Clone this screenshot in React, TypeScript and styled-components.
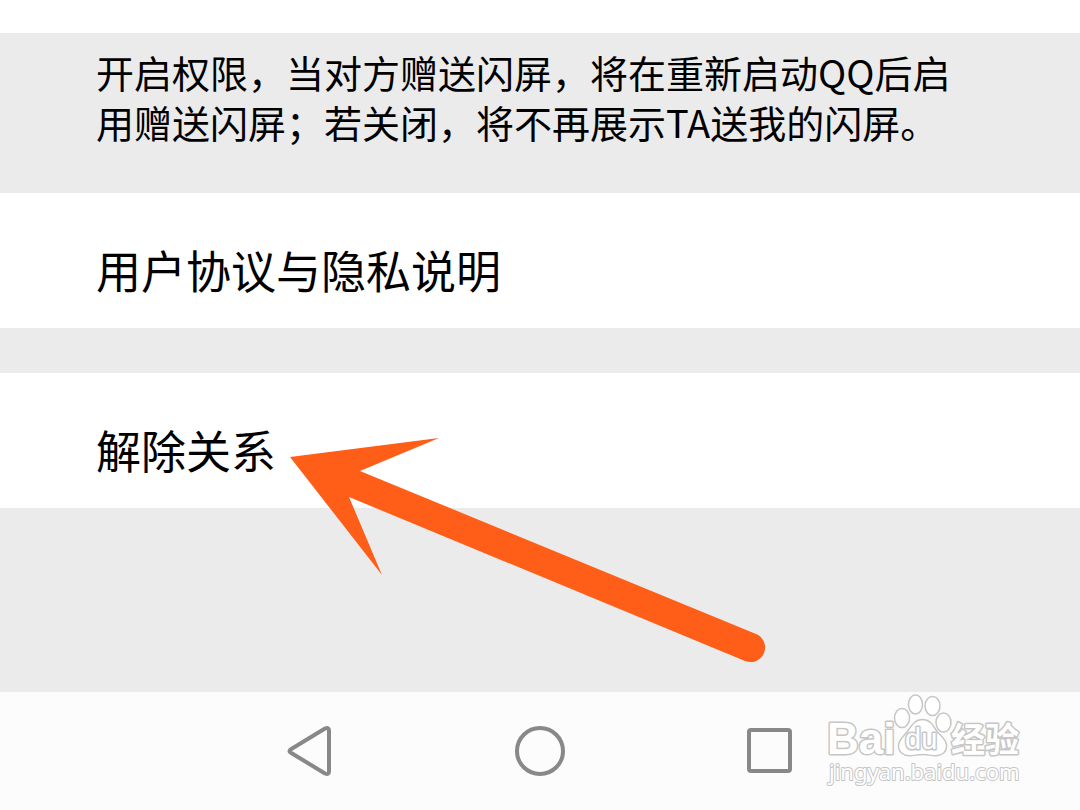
import React from "react";
import styled, { createGlobalStyle } from "styled-components";

const GlobalStyle = createGlobalStyle`
  *, *::before, *::after { box-sizing: border-box; }
  body { margin: 0; background: #ebebeb; }
`;

const Screen = styled.div`
  display: flex;
  flex-direction: column;
  min-height: 100vh;
  overflow-x: hidden;
  background: #ebebeb;
  color: #000;
  font-family: "Noto Sans CJK SC", sans-serif;
`;

const Settings = styled.main`
  flex: 1;
  display: flex;
  flex-direction: column;
`;

const PreviousRow = styled.div`
  height: 33px;
  background: #fff;
`;

const Note = styled.p`
  margin: 0;
  padding: 14px 96px 46px;
  font-size: 38px;
  line-height: 50px;
`;

const Group = styled.section<{ $spaced?: boolean }>`
  position: relative;
  margin-top: ${({ $spaced }) => ($spaced ? "45px" : "0")};
  background: #fff;
`;

const Row = styled.button`
  display: block;
  width: 100%;
  padding: 44px 96px 26px;
  border: 0;
  background: transparent;
  color: inherit;
  font: inherit;
  font-size: 45px;
  line-height: 65px;
  text-align: left;
  text-decoration: none;
  cursor: pointer;
`;

const Pointer = styled.svg`
  position: absolute;
  left: 288px;
  top: 63px;
  z-index: 1;
  pointer-events: none;
`;

const NavBar = styled.nav`
  position: relative;
  display: grid;
  grid-template-columns: repeat(3, 230px);
  justify-content: center;
  height: 118px;
  background: #fcfcfc;
`;

const NavButton = styled.button`
  display: flex;
  align-items: center;
  justify-content: center;
  padding: 0;
  border: 0;
  background: transparent;
  color: #888;
  cursor: pointer;
`;

const NavIcon = styled.svg`
  display: block;
  fill: none;
  stroke: currentColor;
  stroke-linejoin: round;
`;

const Watermark = styled.svg`
  position: absolute;
  right: 52px;
  top: 0;
  pointer-events: none;
  fill: #fff;
  stroke: #c6c6c6;
  stroke-width: 1.5;
  stroke-linejoin: round;
`;

const MarkText = styled.text<{ $size: number; $family?: string; $bold?: boolean; $line?: number }>`
  font-family: ${({ $family }) => `"${$family ?? "Liberation Sans"}"`}, sans-serif;
  font-size: ${({ $size }) => $size}px;
  font-weight: ${({ $bold }) => ($bold ? 700 : 400)};
  stroke-width: ${({ $line }) => $line ?? 3};
  paint-order: stroke;
`;

function BaiduMark() {
  return (
    <Watermark width="204" height="110" viewBox="824 692 204 110" aria-label="Baidu 经验">
      <MarkText x="827" y="754" $size={44} $bold>Bai</MarkText>
      <path d="M922.5 719.5C915.500 719.500 912 724.500 908.500 730C905 735.500 898.500 738.500 898.500 746C898.500 752 903.500 756 910 755.700C914.500 755.500 917.500 754.500 922.500 754.500C927.500 754.500 931 755.700 935.500 755.700C942.500 755.700 947 751.500 946.500 745C946 738 939.500 735.500 936 730C932.500 724.500 929.500 719.500 922.500 719.500Z" />
      <ellipse cx="902" cy="718" rx="7.500" ry="9.500" />
      <ellipse cx="915.500" cy="704.500" rx="7" ry="9.500" />
      <ellipse cx="932.500" cy="706" rx="7.500" ry="9.500" />
      <ellipse cx="943.500" cy="722.500" rx="7.500" ry="9.500" />
      <MarkText x="905" y="749" $size={29} $line={3}>du</MarkText>
      <MarkText x="951" y="752" $size={34} $bold $family="Noto Sans CJK SC">经验</MarkText>
      <MarkText x="829" y="780" $size={22} $family="Noto Sans" $line={2}>jingyan.baidu.com</MarkText>
    </Watermark>
  );
}

export default function App() {
  return (
    <Screen>
      <GlobalStyle />
      <Settings>
        <PreviousRow />
        <Note>
          开启权限，当对方赠送闪屏，将在重新启动QQ后启用赠送闪屏；若关闭，将不再展示TA送我的闪屏。
        </Note>
        <Group>
          <Row as="a" href="#agreement">用户协议与隐私说明</Row>
        </Group>
        <Group $spaced>
          <Row type="button">解除关系</Row>
          <Pointer width="480" height="230" viewBox="288 436 480 230" aria-hidden="true">
            <path
              fill="#ff5e18"
              d="M290 457L439 438L360 471L756 634A14 14 0 0 1 745 661L349 497L382 575Z"
            />
          </Pointer>
        </Group>
      </Settings>
      <NavBar aria-label="系统导航">
        <NavButton type="button" aria-label="返回">
          <NavIcon width="50" height="54" viewBox="0 0 50 54" strokeWidth="4">
            <path d="M5.5 25.5Q3.5 27 5.5 28.5L40 49.500Q44 51 44 47.500V6.500Q44 3 40 4.500Z" />
          </NavIcon>
        </NavButton>
        <NavButton type="button" aria-label="主屏幕">
          <NavIcon width="54" height="54" viewBox="0 0 54 54" strokeWidth="4">
            <circle cx="27" cy="27" r="23" />
          </NavIcon>
        </NavButton>
        <NavButton type="button" aria-label="最近任务">
          <NavIcon width="54" height="54" viewBox="0 0 54 54" strokeWidth="4">
            <rect x="6" y="6" width="41" height="41" rx="2" />
          </NavIcon>
        </NavButton>
        <BaiduMark />
      </NavBar>
    </Screen>
  );
}
